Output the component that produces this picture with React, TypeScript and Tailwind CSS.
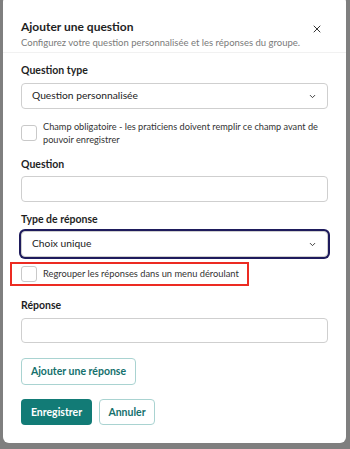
import { X, ChevronDown } from "lucide-react";

const font = { fontFamily: "Lato, 'Open Sans', sans-serif" };

function Checkbox() {
  return (
    <span className="block h-[16px] w-[16px] shrink-0 rounded-[3px] border border-[#c9c9c9] bg-white" />
  );
}

function Select({ value, focused }: { value: string; focused?: boolean }) {
  return (
    <div
      className={
        "flex h-[26px] items-center justify-between rounded-[4px] border border-[#cfcfcf] bg-white pl-[10px] pr-[10px] " +
        (focused ? "ring-2 ring-[#1e1b5c]" : "")
      }
    >
      <span className="text-[10.25px] text-[#222]">{value}</span>
      <ChevronDown size={9} strokeWidth={2.5} className="text-[#333]" />
    </div>
  );
}

function Label({ children }: { children: React.ReactNode }) {
  return (
    <div className="text-[10.5px] font-bold leading-[16px] text-[#1f1f1f]">{children}</div>
  );
}

export default function App() {
  return (
    <div className="h-[449px] w-[350px] overflow-hidden bg-[#7f7f7f]" style={font}>
      <div className="mt-[-4px] ml-[3px] w-[343px] rounded-[6px] bg-white">
        <div className="flex items-start justify-between border-b border-[#f1f1f1] pt-[22px] pb-[2px] pl-[18px] pr-[23px]">
          <div>
            <div className="text-[12px] font-bold leading-[18px] text-[#1f1f1f]">
              Ajouter une question
            </div>
            <div className="text-[9.5px] leading-[14px] text-[#7a7a7a]">
              Configurez votre question personnalisée et les réponses du groupe.
            </div>
          </div>
          <X size={12} strokeWidth={2} className="mt-[5px] text-[#333]" />
        </div>

        <div className="flex flex-col px-[18px] pt-[9px] pb-[18px]">
          <Label>Question type</Label>
          <div className="mt-[5px]">
            <Select value="Question personnalisée" />
          </div>

          <div className="mt-[11px] flex items-center gap-[6px]">
            <Checkbox />
            <span className="text-[9.2px] leading-[13px] text-[#333]">
              Champ obligatoire - les praticiens doivent remplir ce champ avant de pouvoir enregistrer
            </span>
          </div>

          <div className="mt-[10px]">
            <Label>Question</Label>
          </div>
          <div className="mt-[4px] h-[26px] rounded-[4px] border border-[#cfcfcf] bg-white" />

          <div className="mt-[9px]">
            <Label>Type de réponse</Label>
          </div>
          <div className="mt-[4px]">
            <Select value="Choix unique" focused />
          </div>

          <div className="-ml-[11px] mt-[5px] flex h-[24px] w-[239px] items-center gap-[6px] border-2 border-[#ec2b22] pl-[9px]">
            <Checkbox />
            <span className="text-[9.3px] text-[#333]">
              Regrouper les réponses dans un menu déroulant
            </span>
          </div>

          <div className="mt-[11px]">
            <Label>Réponse</Label>
          </div>
          <div className="mt-[5px] h-[25px] rounded-[4px] border border-[#cfcfcf] bg-white" />

          <div className="mt-[14px]">
            <button className="h-[27px] w-[115px] rounded-[4px] border border-[#a9d3d1] bg-white text-[10.5px] font-bold text-[#14706c]">
              Ajouter une réponse
            </button>
          </div>

          <div className="mt-[14px] flex gap-[7px]">
            <button className="h-[26px] w-[71px] rounded-[4px] bg-[#127b76] text-[10.5px] font-bold text-white">
              Enregistrer
            </button>
            <button className="h-[26px] w-[56px] rounded-[4px] border border-[#a9d3d1] bg-white text-[10.5px] font-bold text-[#14706c]">
              Annuler
            </button>
          </div>
        </div>
      </div>
    </div>
  );
}
